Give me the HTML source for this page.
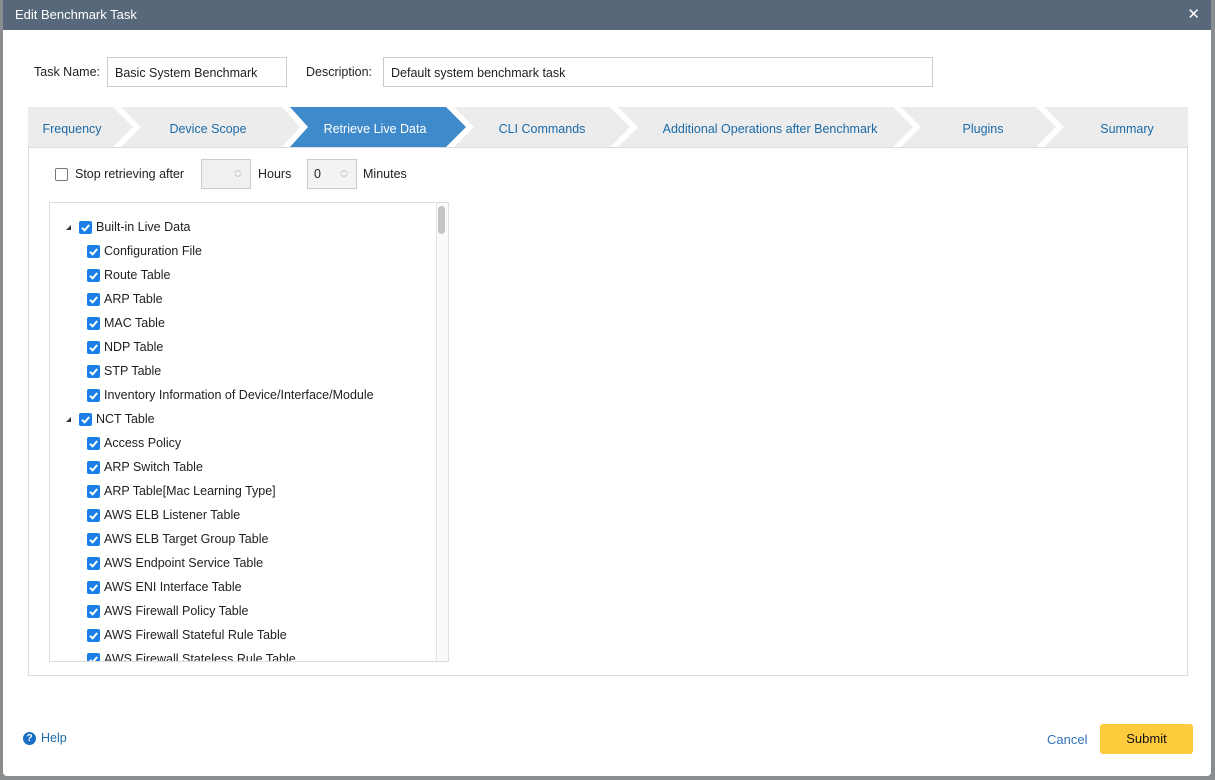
<!DOCTYPE html>
<html><head><style>
*{box-sizing:border-box;margin:0;padding:0}
body{width:1215px;height:780px;background:#8a8d90;font-family:"Liberation Sans",sans-serif;font-size:12.5px;color:#222;position:relative;overflow:hidden}
.dlg{position:absolute;left:3px;top:0;width:1208px;height:776px;background:#fff;border-radius:0 0 4px 4px;overflow:hidden}
.title{height:30px;background:#56687a;color:#fff;font-size:13px;line-height:30px;padding-left:12px}
.x{position:absolute;right:11px;top:7px;color:#fff;font-size:15px;line-height:15px}
.abs{position:absolute}
.inp{position:absolute;border:1px solid #ccc;height:30px;line-height:28px;padding-left:7px;background:#fff}
.panel{position:absolute;left:25px;top:147px;width:1160px;height:529px;border:1px solid #ddd;border-top:none}
.cb{position:absolute;width:13px;height:13px;border-radius:2px;background:#1a7fe6}
.cb svg{position:absolute;left:0;top:0}
.row{position:absolute;height:24px;line-height:24px}
.tree{position:absolute;left:46px;top:202px;width:400px;height:460px;border:1px solid #ddd;overflow:hidden}
.spin{position:absolute;border:1px solid #ccc;height:30px;width:50px;top:159px}
</style></head><body>
<div class="dlg">
<div class="title">Edit Benchmark Task</div>
<div class="x">✕</div>
<div class="abs" style="left:31px;top:65px">Task Name:</div>
<div class="inp" style="left:104px;top:57px;width:180px;line-height:30px">Basic System Benchmark</div>
<div class="abs" style="left:303px;top:65px">Description:</div>
<div class="inp" style="left:380px;top:57px;width:550px;line-height:30px">Default system benchmark task</div>

<svg class="abs" style="left:25px;top:107px" width="1160" height="41" viewBox="25 107 1160 41">
<rect x="25" y="107" width="1160" height="40" fill="#ececec"/>
<g fill="#fff">
<polygon points="110,107 118,107 138,127 118,147 110,147 130,127"/>
<polygon points="279,107 287,107 305,127 287,147 279,147 297,127"/>
<polygon points="443,107 451,107 471,127 451,147 443,147 463,127"/>
<polygon points="607,107 615,107 635,127 615,147 607,147 627,127"/>
<polygon points="890,107 898,107 918,127 898,147 890,147 910,127"/>
<polygon points="1033,107 1041,107 1061,127 1041,147 1033,147 1053,127"/>
</g>
<polygon points="287,107 443,107 463,127 443,147 287,147 305,127" fill="#3f8acb"/>
<line x1="25" y1="147.5" x2="1185" y2="147.5" stroke="#ddd"/>
<g font-family="Liberation Sans,sans-serif" font-size="12.5" fill="#1a6aa8" text-anchor="middle">
<text x="69" y="133">Frequency</text>
<text x="205" y="133">Device Scope</text>
<text x="372" y="133" fill="#fff">Retrieve Live Data</text>
<text x="539" y="133">CLI Commands</text>
<text x="767" y="133">Additional Operations after Benchmark</text>
<text x="980" y="133">Plugins</text>
<text x="1124" y="133">Summary</text>
</g>
</svg>
<div class="panel"></div>

<div class="abs" style="left:52px;top:168px;width:13px;height:13px;border:1.5px solid #777;border-radius:2px"></div>
<div class="abs" style="left:72px;top:167px">Stop retrieving after</div>
<div class="spin" style="left:198px;background:#f0f0f0"><span class="abs" style="right:8px;top:5px;color:#aaa;font-size:8px;line-height:9px">︿<br>﹀</span></div>
<div class="abs" style="left:255px;top:167px">Hours</div>
<div class="spin" style="left:304px;background:#f3f3f3"><span class="abs" style="left:6px;top:7px">0</span><span class="abs" style="right:8px;top:5px;color:#aaa;font-size:8px;line-height:9px">︿<br>﹀</span></div>
<div class="abs" style="left:360px;top:167px">Minutes</div>

<div class="tree">
<div class="abs" style="left:386px;top:0;width:14px;height:460px;border-left:1px solid #e5e5e5;background:#fafafa"></div>
<div class="abs" style="left:388px;top:3px;width:7px;height:28px;border-radius:4px;background:#c4c4c4"></div>
</div>
<div id="rows"></div>
<script>
var items=[[0,"Built-in Live Data"],[1,"Configuration File"],[1,"Route Table"],[1,"ARP Table"],[1,"MAC Table"],[1,"NDP Table"],[1,"STP Table"],[1,"Inventory Information of Device/Interface/Module"],[0,"NCT Table"],[1,"Access Policy"],[1,"ARP Switch Table"],[1,"ARP Table[Mac Learning Type]"],[1,"AWS ELB Listener Table"],[1,"AWS ELB Target Group Table"],[1,"AWS Endpoint Service Table"],[1,"AWS ENI Interface Table"],[1,"AWS Firewall Policy Table"],[1,"AWS Firewall Stateful Rule Table"],[1,"AWS Firewall Stateless Rule Table"]];
var h='<div style="position:absolute;left:47px;top:203px;width:385px;height:458px;overflow:hidden">';
var chk='<svg width="13" height="13"><path d="M3 6.8 L5.6 9.3 L10.2 4" stroke="#fff" stroke-width="2" fill="none"/></svg>';
items.forEach(function(it,i){
 var y=i*24+24; var x=it[0]?37:29;
 if(!it[0]) h+='<div style="position:absolute;left:16px;top:'+(y-2)+'px;width:0;height:0;border-left:5px solid transparent;border-bottom:5px solid #333"></div>';
 h+='<div class="cb" style="left:'+x+'px;top:'+(y-6)+'px">'+chk+'</div>';
 h+='<div class="row" style="left:'+(x+17)+'px;top:'+(y-12)+'px">'+it[1]+'</div>';
});
h+='</div>';
document.getElementById('rows').innerHTML=h;
</script>

<div class="abs" style="left:20px;top:732px;width:13px;height:13px;border-radius:50%;background:#1a6fc4;color:#fff;font-size:10px;font-weight:bold;text-align:center;line-height:13px">?</div>
<div class="abs" style="left:38px;top:731px;color:#1a6aa8">Help</div>
<div class="abs" style="left:1044px;top:732px;color:#2f72b5;font-size:13px">Cancel</div>
<div class="abs" style="left:1097px;top:724px;width:93px;height:30px;background:#fdcb3c;border-radius:3px;text-align:center;line-height:30px;font-size:13px;color:#111">Submit</div>
</div>
</body></html>
